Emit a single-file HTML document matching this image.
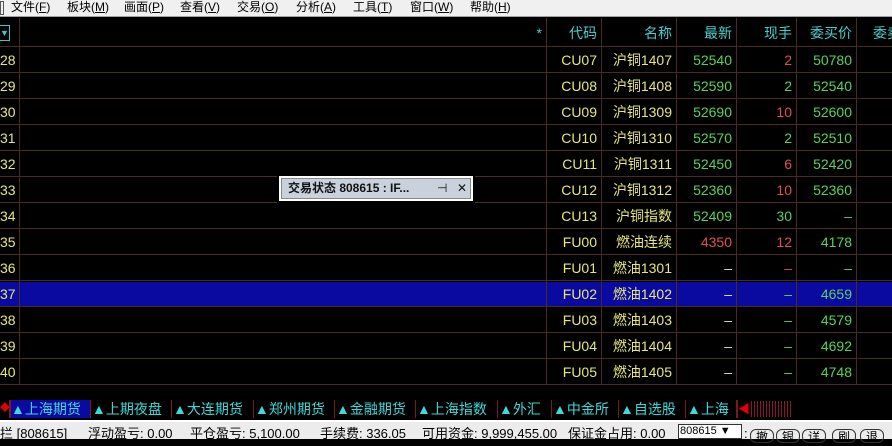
<!DOCTYPE html>
<html><head><meta charset="utf-8"><style>
*{margin:0;padding:0;box-sizing:border-box}
body{width:892px;height:439px;overflow:hidden;background:#000;font-family:"Liberation Sans","Noto Sans CJK SC",sans-serif;position:relative}
.menu{position:absolute;left:0;top:0;width:892px;height:17px;background:#f0f0f0;font-size:12px;color:#000;line-height:15px;white-space:nowrap;border-bottom:1px solid #a0a0a0}
.menu span{position:absolute;top:0}
.grid{position:absolute;left:0;top:18px;width:892px;height:370px;background:#000}
.hl{position:absolute;left:0;width:892px;height:1px;background:#4a2a22}
.vl{position:absolute;top:18px;width:1px;height:367px;background:#4a2a22}
.c{position:absolute;font-size:14px;line-height:26px;height:26px;text-align:right;white-space:nowrap}
.h{color:#4ccccc}
.y{color:#e6e67a}
.g{color:#5ad25a}
.r{color:#e05050}
.w{color:#e0e0c0}
.sel{position:absolute;left:0;top:282px;width:892px;height:25px;background:#0a0aa0}
.tabs{position:absolute;left:0;top:400px;width:892px;height:18px;background:#000;font-size:14px;line-height:18px;white-space:nowrap}
.tab{position:absolute;top:0;height:18px;color:#40d8d8;border-right:1px solid #7a1a1a}
.status{position:absolute;left:0;top:420px;width:892px;height:19px;background:#ececec;border-top:2px solid #fff;font-size:13px;line-height:24px;white-space:nowrap;color:#000}
.status span{position:absolute;top:0}
.btn{position:absolute;top:7px;height:14px;border:1px solid #333;border-radius:6px;font-size:12px;line-height:14px;text-align:center;width:24px}
</style></head><body>
<div class="menu">
<span style="left:0;width:4px;height:14px;border:1px solid #555;top:1px"></span>
<span style="left:11px">文件(<u>F</u>)</span>
<span style="left:67px">板块(<u>M</u>)</span>
<span style="left:124px">画面(<u>P</u>)</span>
<span style="left:180px">查看(<u>V</u>)</span>
<span style="left:237px">交易(<u>O</u>)</span>
<span style="left:296px">分析(<u>A</u>)</span>
<span style="left:353px">工具(<u>T</u>)</span>
<span style="left:410px">窗口(<u>W</u>)</span>
<span style="left:470px">帮助(<u>H</u>)</span>
</div>
<div class="grid"></div>
<div class="sel"></div>
<div class="hl" style="top:46px"></div><div class="hl" style="top:72px"></div><div class="hl" style="top:98px"></div><div class="hl" style="top:124px"></div><div class="hl" style="top:150px"></div><div class="hl" style="top:176px"></div><div class="hl" style="top:202px"></div><div class="hl" style="top:228px"></div><div class="hl" style="top:254px"></div><div class="hl" style="top:280px"></div><div class="hl" style="top:306px"></div><div class="hl" style="top:332px"></div><div class="hl" style="top:358px"></div><div class="hl" style="top:384px"></div>
<div class="vl" style="left:19px"></div><div class="vl" style="left:546px"></div><div class="vl" style="left:601px"></div><div class="vl" style="left:676px"></div><div class="vl" style="left:736px"></div><div class="vl" style="left:796px"></div><div class="vl" style="left:856px"></div>
<div style="position:absolute;left:0;top:25px;width:10px;height:16px;border:1px solid #40c8c8;border-left:none;color:#40c8c8;font-size:9px;line-height:14px;text-align:center">▼</div>
<div class="c h" style="left:520px;width:22px;top:20px">*</div>
<div class="c h" style="left:546px;width:51px;top:20px">代码</div>
<div class="c h" style="left:601px;width:71px;top:20px">名称</div>
<div class="c h" style="left:676px;width:56px;top:20px">最新</div>
<div class="c h" style="left:736px;width:56px;top:20px">现手</div>
<div class="c h" style="left:796px;width:56px;top:20px">委买价</div>
<div class="c h" style="left:873px;top:20px;text-align:left">委卖</div>
<div class="c y" style="left:0;top:47px;text-align:left">28</div><div class="c y" style="left:546px;width:51px;top:47px">CU07</div><div class="c y" style="left:601px;width:71px;top:47px">沪铜1407</div><div class="c g" style="left:676px;width:56px;top:47px">52540</div><div class="c r" style="left:736px;width:56px;top:47px">2</div><div class="c g" style="left:796px;width:56px;top:47px">50780</div>
<div class="c y" style="left:0;top:73px;text-align:left">29</div><div class="c y" style="left:546px;width:51px;top:73px">CU08</div><div class="c y" style="left:601px;width:71px;top:73px">沪铜1408</div><div class="c g" style="left:676px;width:56px;top:73px">52590</div><div class="c g" style="left:736px;width:56px;top:73px">2</div><div class="c g" style="left:796px;width:56px;top:73px">52540</div>
<div class="c y" style="left:0;top:99px;text-align:left">30</div><div class="c y" style="left:546px;width:51px;top:99px">CU09</div><div class="c y" style="left:601px;width:71px;top:99px">沪铜1309</div><div class="c g" style="left:676px;width:56px;top:99px">52690</div><div class="c r" style="left:736px;width:56px;top:99px">10</div><div class="c g" style="left:796px;width:56px;top:99px">52600</div>
<div class="c y" style="left:0;top:125px;text-align:left">31</div><div class="c y" style="left:546px;width:51px;top:125px">CU10</div><div class="c y" style="left:601px;width:71px;top:125px">沪铜1310</div><div class="c g" style="left:676px;width:56px;top:125px">52570</div><div class="c g" style="left:736px;width:56px;top:125px">2</div><div class="c g" style="left:796px;width:56px;top:125px">52510</div>
<div class="c y" style="left:0;top:151px;text-align:left">32</div><div class="c y" style="left:546px;width:51px;top:151px">CU11</div><div class="c y" style="left:601px;width:71px;top:151px">沪铜1311</div><div class="c g" style="left:676px;width:56px;top:151px">52450</div><div class="c r" style="left:736px;width:56px;top:151px">6</div><div class="c g" style="left:796px;width:56px;top:151px">52420</div>
<div class="c y" style="left:0;top:177px;text-align:left">33</div><div class="c y" style="left:546px;width:51px;top:177px">CU12</div><div class="c y" style="left:601px;width:71px;top:177px">沪铜1312</div><div class="c g" style="left:676px;width:56px;top:177px">52360</div><div class="c r" style="left:736px;width:56px;top:177px">10</div><div class="c g" style="left:796px;width:56px;top:177px">52360</div>
<div class="c y" style="left:0;top:203px;text-align:left">34</div><div class="c y" style="left:546px;width:51px;top:203px">CU13</div><div class="c y" style="left:601px;width:71px;top:203px">沪铜指数</div><div class="c g" style="left:676px;width:56px;top:203px">52409</div><div class="c g" style="left:736px;width:56px;top:203px">30</div><div class="c g" style="left:796px;width:56px;top:203px">–</div>
<div class="c y" style="left:0;top:229px;text-align:left">35</div><div class="c y" style="left:546px;width:51px;top:229px">FU00</div><div class="c y" style="left:601px;width:71px;top:229px">燃油连续</div><div class="c r" style="left:676px;width:56px;top:229px">4350</div><div class="c r" style="left:736px;width:56px;top:229px">12</div><div class="c g" style="left:796px;width:56px;top:229px">4178</div>
<div class="c y" style="left:0;top:255px;text-align:left">36</div><div class="c y" style="left:546px;width:51px;top:255px">FU01</div><div class="c y" style="left:601px;width:71px;top:255px">燃油1301</div><div class="c w" style="left:676px;width:56px;top:255px">–</div><div class="c r" style="left:736px;width:56px;top:255px">–</div><div class="c g" style="left:796px;width:56px;top:255px">–</div>
<div class="c y" style="left:0;top:281px;text-align:left">37</div><div class="c y" style="left:546px;width:51px;top:281px">FU02</div><div class="c y" style="left:601px;width:71px;top:281px">燃油1402</div><div class="c w" style="left:676px;width:56px;top:281px">–</div><div class="c g" style="left:736px;width:56px;top:281px">–</div><div class="c g" style="left:796px;width:56px;top:281px">4659</div>
<div class="c y" style="left:0;top:307px;text-align:left">38</div><div class="c y" style="left:546px;width:51px;top:307px">FU03</div><div class="c y" style="left:601px;width:71px;top:307px">燃油1403</div><div class="c w" style="left:676px;width:56px;top:307px">–</div><div class="c g" style="left:736px;width:56px;top:307px">–</div><div class="c g" style="left:796px;width:56px;top:307px">4579</div>
<div class="c y" style="left:0;top:333px;text-align:left">39</div><div class="c y" style="left:546px;width:51px;top:333px">FU04</div><div class="c y" style="left:601px;width:71px;top:333px">燃油1404</div><div class="c w" style="left:676px;width:56px;top:333px">–</div><div class="c g" style="left:736px;width:56px;top:333px">–</div><div class="c g" style="left:796px;width:56px;top:333px">4692</div>
<div class="c y" style="left:0;top:359px;text-align:left">40</div><div class="c y" style="left:546px;width:51px;top:359px">FU05</div><div class="c y" style="left:601px;width:71px;top:359px">燃油1405</div><div class="c w" style="left:676px;width:56px;top:359px">–</div><div class="c g" style="left:736px;width:56px;top:359px">–</div><div class="c g" style="left:796px;width:56px;top:359px">4748</div>
<div style="position:absolute;left:277px;top:174px;width:198px;height:29px;background:#fff;border:2px solid #000;padding:2px">
<div style="width:100%;height:100%;background:#c9d1dc;border:1px solid #888;font-size:12px;font-weight:bold;line-height:19px;padding-left:6px;color:#111;white-space:nowrap;position:relative">交易状态 808615 : IF...<span style="position:absolute;left:155px;font-weight:normal">⊣</span><span style="position:absolute;left:175px;font-weight:normal">✕</span></div></div>
<div class="tabs">
<div class="tab" style="left:0;width:10px;color:#e00000;font-size:10px">◆</div>
<div class="tab" style="left:10px;width:81px;background:#0a0aa0;border-left:1px solid #7a1a1a">▲上海期货</div>
<div class="tab" style="left:92px;width:80px">▲上期夜盘</div>
<div class="tab" style="left:173px;width:81px">▲大连期货</div>
<div class="tab" style="left:255px;width:80px">▲郑州期货</div>
<div class="tab" style="left:336px;width:80px">▲金融期货</div>
<div class="tab" style="left:417px;width:81px">▲上海指数</div>
<div class="tab" style="left:499px;width:53px">▲外汇</div>
<div class="tab" style="left:553px;width:66px">▲中金所</div>
<div class="tab" style="left:620px;width:66px">▲自选股</div>
<div class="tab" style="left:687px;width:50px">▲上海</div>
<div class="tab" style="left:737px;width:14px;color:#e00000;font-size:12px;border-left:1px solid #7a1a1a;border-right:none">◀</div>
<div style="position:absolute;left:751px;top:1px;width:41px;height:16px;background:repeating-linear-gradient(90deg,#8a1a1a 0,#8a1a1a 1px,#000 1px,#000 3px)"></div>
</div>
<div class="status">
<span style="left:0">拦 [808615]</span>
<span style="left:88px">浮动盈亏: 0.00</span>
<span style="left:190px">平仓盈亏: 5,100.00</span>
<span style="left:320px">手续费: 336.05</span>
<span style="left:422px">可用资金: 9,999,455.00</span>
<span style="left:568px">保证金占用: 0.00</span>
<span style="left:678px;top:2px;width:64px;height:15px;background:#fff;border:1px solid #333;line-height:13px;font-size:11px;padding-left:1px">808615 ▼</span>
<span style="left:744px">:</span>
<div class="btn" style="left:750px">撤</div><div class="btn" style="left:776px">银</div><div class="btn" style="left:802px">详</div><div class="btn" style="left:832px">刷</div><div class="btn" style="left:860px">退</div>
</div>
</body></html>
